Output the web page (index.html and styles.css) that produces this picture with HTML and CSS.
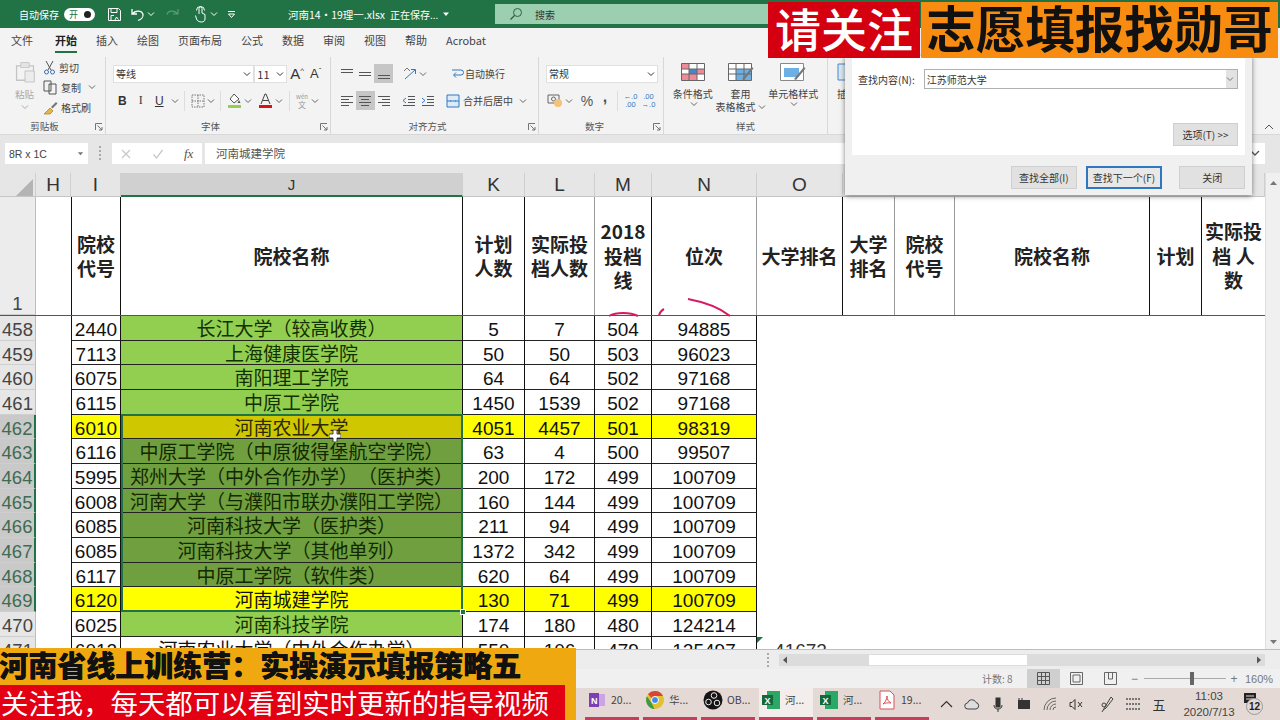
FILE: index.html
```html
<!DOCTYPE html>
<html lang="zh-CN">
<head>
<meta charset="utf-8">
<title>河南14·19理一.xlsx - Excel</title>
<link rel="stylesheet" href="styles.css">
</head>
<body>
<svg class="defs" width="0" height="0" aria-hidden="true">
  <symbol id="chev" viewBox="0 0 8 8"><path d="M1 2.500 4 5.500 7 2.500" fill="none" stroke="currentColor" stroke-width="1"/></symbol>
  <symbol id="launch" viewBox="0 0 8 8"><path d="M.5 7V.5H7M2.500 2.500 7 7M7 4v3H4" fill="none" stroke="#666" stroke-width=".9"/></symbol>
</svg>

<div class="app">
  <header class="titlebar">
    <span class="autosave">自动保存</span>
    <span class="toggle"><span class="toggle-text">开</span><span class="knob"></span></span>
    <svg class="qa qa-save" width="15" height="15" viewBox="0 0 15 15"><path d="M1.500 1.500h10l2 2v10h-12zM4 1.500v4h6v-4M4 13.500v-5h3M8 13l1.500-3 2 2.500" fill="none" stroke="#fff" stroke-width="1"/></svg>
    <svg class="qa qa-undo" width="15" height="15" viewBox="0 0 15 15"><path d="M2 2v5h5M2.500 7C5 3 12 3 13 7.500 13.500 10 11 12.500 8 13.500" fill="none" stroke="#fff" stroke-width="1.300"/></svg>
    <svg class="qa-chev" width="8" height="8"><use href="#chev"/></svg>
    <svg class="qa qa-redo" width="15" height="15" viewBox="0 0 15 15"><path d="M13 2v5H8M12.500 7C10 3 3 3 2 7.500" fill="none" stroke="#5c9a78" stroke-width="1.200"/></svg>
    <svg class="qa qa-touch" width="14" height="17" viewBox="0 0 14 17"><path d="M5 8V2.500a1.500 1.500 0 0 1 3 0V7l3 1.500V13c0 2-1.500 3-3.500 3S3 15 2.500 13L1.500 9.500M2.500 4.500a4 4 0 0 1 8 0" fill="none" stroke="#fff" stroke-width="1"/></svg>
    <svg class="qa-chev" width="8" height="8"><use href="#chev"/></svg>
    <svg class="qa-custom" width="9" height="9" viewBox="0 0 9 9"><path d="M1 1.500h7M1.500 4 4.500 7.500 7.500 4z" fill="none" stroke="#fff" stroke-width="1"/></svg>
    <span class="filename">河南14·19理一.xlsx</span>
    <span class="saving">正在保存...</span>
    <svg class="title-caret" width="8" height="8" viewBox="0 0 8 8"><path d="M1 2.500h6L4 6z" fill="#fff"/></svg>
    <div class="search">
      <svg width="14" height="14" viewBox="0 0 14 14"><circle cx="8.500" cy="5.500" r="4" fill="none" stroke="#2f5f45"/><path d="M5.500 8.500 1.500 12.500" stroke="#2f5f45" stroke-width="1.300"/></svg>
      <span>搜索</span>
    </div>
  </header>

  <nav class="tabs">
    <span class="tab">文件</span>
    <span class="tab tab-active">开始</span>
    <span class="tab">插入</span>
    <span class="tab">绘图</span>
    <span class="tab">页面布局</span>
    <span class="tab">公式</span>
    <span class="tab">数据</span>
    <span class="tab">审阅</span>
    <span class="tab">视图</span>
    <span class="tab">帮助</span>
    <span class="tab">Acrobat</span>
  </nav>

  <section class="ribbon">
    <div class="group g-clip">
      <div class="group-body clip-body">
        <div class="paste">
          <svg width="22" height="27" viewBox="0 0 26 32"><path d="M3 7h20v17H3z" fill="none" stroke="#c4c4c4" stroke-width="1.500"/><path d="M8 3h10v6H8z" fill="#e4e4e4" stroke="#c4c4c4"/><path d="M13 13h11v13H13z" fill="#ececec" stroke="#bdbdbd"/></svg>
          <span>粘贴</span>
          <svg class="chev-gray" width="8" height="8"><use href="#chev"/></svg>
        </div>
        <div class="clip-list">
          <div class="clip-item"><svg width="13" height="15" viewBox="0 0 13 15"><path d="M3 1l5 9M10 1 5 10" stroke="#555" fill="none"/><circle cx="3.500" cy="12" r="2" fill="none" stroke="#3a70b0"/><circle cx="9.500" cy="12" r="2" fill="none" stroke="#3a70b0"/></svg><span>剪切</span></div>
          <div class="clip-item"><svg width="15" height="15" viewBox="0 0 15 15"><path d="M1 1h7v10H1zM6 4h7v10H6z" fill="#f3f3f3" stroke="#555"/></svg><span>复制</span><svg class="chev-sm" width="8" height="8"><use href="#chev"/></svg></div>
          <div class="clip-item"><svg width="15" height="15" viewBox="0 0 15 15"><path d="M1 14 7 8l3 3-3 3z" fill="#e9b44c" stroke="#a97c20" stroke-width=".7"/><path d="M8 7l5-5 1.500 1.500-5 5z" fill="#777"/></svg><span>格式刷</span></div>
        </div>
      </div>
      <div class="group-label">剪贴板<svg class="launch" width="8" height="8"><use href="#launch"/></svg></div>
    </div>

    <div class="group g-font">
      <div class="group-body">
        <div class="tool-row">
          <div class="select sel-font"><span>等线</span><svg width="8" height="8"><use href="#chev"/></svg></div>
          <div class="select sel-size"><span>11</span><svg width="8" height="8"><use href="#chev"/></svg></div>
          <span class="grow-a">A<sup>^</sup></span>
          <span class="shrink-a">A<sup>ˇ</sup></span>
        </div>
        <div class="tool-row fmt-row">
          <b class="fmt fmt-b">B</b><i class="fmt fmt-i">I</i><u class="fmt fmt-u">U</u>
          <svg class="c-gray" width="8" height="8"><use href="#chev"/></svg>
          <span class="vsep"></span>
          <svg class="ic" width="14" height="14" viewBox="0 0 14 14"><path d="M1 1h12v12H1zM7 1v12M1 7h12" fill="none" stroke="#777" stroke-dasharray="1.500 1"/></svg>
          <svg class="c-gray" width="8" height="8"><use href="#chev"/></svg>
          <span class="vsep"></span>
          <svg class="ic" width="15" height="15" viewBox="0 0 15 15"><path d="M7 1 12 6 7 10 3 6z" fill="#fff" stroke="#555"/><path d="M12 7l1.500 3h-3z" fill="#555"/><path d="M1 12h13v3H1z" fill="#92d050"/></svg>
          <svg class="c-gray" width="8" height="8"><use href="#chev"/></svg>
          <svg class="ic ic-color" width="15" height="15" viewBox="0 0 15 15"><path d="M3 11 7 1h1l4 10M4.500 7.500h6" fill="none" stroke="#444"/><path d="M1 12h13v3H1z" fill="#e01010"/></svg>
          <svg class="c-gray" width="8" height="8"><use href="#chev"/></svg>
          <span class="vsep"></span>
          <span class="wen"><small>wén</small>文</span>
          <svg class="c-gray" width="8" height="8"><use href="#chev"/></svg>
        </div>
      </div>
      <div class="group-label">字体<svg class="launch" width="8" height="8"><use href="#launch"/></svg></div>
    </div>

    <div class="group g-align">
      <div class="group-body">
        <div class="tool-row al-row">
          <span class="al"><svg width="14" height="12" viewBox="0 0 14 12"><path d="M1 1.500h12M1 4.500h12" stroke="#555"/></svg></span>
          <span class="al"><svg width="14" height="12" viewBox="0 0 14 12"><path d="M1 4.500h12M1 7.500h12" stroke="#555"/></svg></span>
          <span class="al al-on"><svg width="14" height="12" viewBox="0 0 14 12"><path d="M1 7.500h12M1 10.500h12" stroke="#555"/></svg></span>
          <svg class="orient" width="14" height="14" viewBox="0 0 14 14"><path d="M2 12 12 3M8 2.500h4.500V7" fill="none" stroke="#2f78c0"/><path d="M1 4l3-3 3 3" fill="none" stroke="#777"/></svg>
          <svg class="c-gray" width="8" height="8"><use href="#chev"/></svg>
          <svg class="wrap-ic" width="14" height="14" viewBox="0 0 14 14"><path d="M2 3h9a2 2 0 0 1 0 5H4M6 5.500 3.500 8 6 10.500" fill="none" stroke="#2f78c0"/></svg>
          <span class="al-text">自动换行</span>
        </div>
        <div class="tool-row al-row">
          <span class="al"><svg width="14" height="12" viewBox="0 0 14 12"><path d="M1 1.500h12M1 4.500h8M1 7.500h12M1 10.500h8" stroke="#555"/></svg></span>
          <span class="al al-on"><svg width="14" height="12" viewBox="0 0 14 12"><path d="M1 1.500h12M3 4.500h8M1 7.500h12M3 10.500h8" stroke="#555"/></svg></span>
          <span class="al"><svg width="14" height="12" viewBox="0 0 14 12"><path d="M1 1.500h12M5 4.500h8M1 7.500h12M5 10.500h8" stroke="#555"/></svg></span>
          <svg class="indent" width="14" height="12" viewBox="0 0 14 12"><path d="M6 1.500h7M6 4.500h7M6 7.500h7M1 10.500h12" stroke="#555"/><path d="M4 3 1 5.500 4 8" fill="none" stroke="#2f78c0"/></svg>
          <svg class="indent2" width="14" height="12" viewBox="0 0 14 12"><path d="M6 1.500h7M6 4.500h7M6 7.500h7M1 10.500h12" stroke="#555"/><path d="M1 3 4 5.500 1 8" fill="none" stroke="#2f78c0"/></svg>
          <svg class="merge-ic" width="14" height="14" viewBox="0 0 14 14"><path d="M1 1h12v12H1zM1 7h4M9 7h4" fill="#dcebf7" stroke="#2f78c0"/><path d="M4 7h6" stroke="#2f78c0"/></svg>
          <span class="al-text merge-text">合并后居中</span>
          <svg class="c-gray merge-chev" width="8" height="8"><use href="#chev"/></svg>
        </div>
      </div>
      <div class="group-label">对齐方式<svg class="launch" width="8" height="8"><use href="#launch"/></svg></div>
    </div>

    <div class="group g-num">
      <div class="group-body">
        <div class="tool-row">
          <div class="select sel-num"><span>常规</span><svg width="8" height="8"><use href="#chev"/></svg></div>
        </div>
        <div class="tool-row num-row">
          <svg width="16" height="15" viewBox="0 0 16 15"><path d="M1 2h11v8H1z" fill="none" stroke="#666"/><circle cx="6.500" cy="6" r="2" fill="none" stroke="#666"/><circle cx="11" cy="10" r="4" fill="#f4c27a"/></svg>
          <svg class="c-gray" width="8" height="8"><use href="#chev"/></svg>
          <span class="pct">%</span>
          <span class="comma">,</span>
          <span class="vsep"></span>
          <span class="dec"><em>←.0</em><em>.00</em></span>
          <span class="dec"><em>.00</em><em>→.0</em></span>
        </div>
      </div>
      <div class="group-label">数字<svg class="launch" width="8" height="8"><use href="#launch"/></svg></div>
    </div>

    <div class="group g-style">
      <div class="group-body style-body">
        <div class="big-btn big-cond">
          <svg width="24" height="18" viewBox="0 0 24 18"><path d="M.5.5h23v17H.5z" fill="#fff" stroke="#666"/><path d="M1 1h7v5H1zM16 6h7v5h-7zM1 11h7v6H1zM8 11h8v6H8z" fill="#f08a98"/><path d="M8 6h8v5H8z" fill="#4a86c5"/><path d="M8 .5v17M16 .5v17M.5 6h23M.5 11h23" stroke="#666" fill="none"/></svg>
          <span>条件格式</span><svg class="c-gray" width="8" height="8"><use href="#chev"/></svg>
        </div>
        <div class="big-btn big-table">
          <svg width="26" height="18" viewBox="0 0 26 18"><path d="M.5.5h23v17H.5z" fill="#fff" stroke="#666"/><path d="M8 6h15v11H8z" fill="#6cb0e6"/><path d="M8 .5v17M16 .5v17M.5 6h23M.5 11h23" stroke="#666" fill="none"/><path d="M14 16 24 4l1.500 1.500L16 17z" fill="#777"/></svg>
          <span>套用</span><span class="big-line">表格格式<svg class="c-gray" width="8" height="8"><use href="#chev"/></svg></span>
        </div>
        <div class="big-btn big-cell">
          <svg width="26" height="18" viewBox="0 0 26 18"><path d="M.5.5h23v17H.5z" fill="#fff" stroke="#888"/><path d="M4 5h15v9H4z" fill="#6cb0e6"/><path d="M14 16 24 4l1.500 1.500L16 17z" fill="#777"/></svg>
          <span>单元格样式</span><svg class="c-gray" width="8" height="8"><use href="#chev"/></svg>
        </div>
      </div>
      <div class="group-label">样式</div>
    </div>

    <div class="big-btn big-insert">
      <svg width="20" height="18" viewBox="0 0 20 18"><path d="M1 1h18v16H1z" fill="#d8e8f5" stroke="#4a86c5"/></svg>
      <span>插入</span>
    </div>

    <button class="collapse" type="button"><svg width="10" height="10" viewBox="0 0 10 10"><path d="M1 7 5 3l4 4" fill="none" stroke="#555"/></svg></button>
  </section>

  <section class="formula">
    <div class="namebox"><span>8R x 1C</span><svg width="7" height="7" viewBox="0 0 8 8"><path d="M1 2.500h6L4 6z" fill="#777"/></svg></div>
    <span class="grip"></span>
    <div class="fx-btns">
      <svg width="12" height="12" viewBox="0 0 12 12"><path d="M2 2l8 8M10 2l-8 8" stroke="#c8c8c8" stroke-width="1.300"/></svg>
      <svg width="12" height="12" viewBox="0 0 12 12"><path d="M1.500 6.500 4.500 10l6-8" fill="none" stroke="#c8c8c8" stroke-width="1.300"/></svg>
      <span class="fx">fx</span>
    </div>
    <div class="fx-input">河南城建学院</div>
    <div class="fx-drop"><svg width="10" height="10" viewBox="0 0 10 10"><path d="M1 3l4 4 4-4" fill="none" stroke="#555" stroke-width="1.300"/></svg></div>
  </section>

  <main class="sheet">
    <div class="grid">
      <div class="row colhead">
        <div class="corner"><span></span></div>
        <div>H</div><div>I</div><div class="col-on">J</div><div>K</div><div>L</div><div>M</div><div>N</div><div>O</div><div>P</div><div>Q</div><div>R</div><div>S</div><div>T</div>
      </div>
      <div class="row headrow">
        <div class="rh rh-one">1</div>
        <div></div>
        <div class="h">院校<br>代号</div>
        <div class="h">院校名称</div>
        <div class="h">计划<br>人数</div>
        <div class="h h-soft">实际投<br>档人数</div>
        <div class="h">2018<br>投档<br>线</div>
        <div class="h h-soft">位次</div>
        <div class="h">大学排名</div>
        <div class="h h-soft">大学<br>排名</div>
        <div class="h h-soft">院校<br>代号</div>
        <div class="h">院校名称</div>
        <div class="h">计划</div>
        <div class="h h-last">实际投<br>档 人<br>数</div>
      </div>

      <div class="row"><div class="rh">458</div><div></div><div class="c">2440</div><div class="c g">长江大学（较高收费）</div><div class="c">5</div><div class="c">7</div><div class="c">504</div><div class="c">94885</div></div>
      <div class="row"><div class="rh">459</div><div></div><div class="c">7113</div><div class="c g">上海健康医学院</div><div class="c">50</div><div class="c">50</div><div class="c">503</div><div class="c">96023</div></div>
      <div class="row"><div class="rh">460</div><div></div><div class="c">6075</div><div class="c g">南阳理工学院</div><div class="c">64</div><div class="c">64</div><div class="c">502</div><div class="c">97168</div></div>
      <div class="row"><div class="rh">461</div><div></div><div class="c">6115</div><div class="c g">中原工学院</div><div class="c">1450</div><div class="c">1539</div><div class="c">502</div><div class="c">97168</div></div>
      <div class="row"><div class="rh rh-on">462</div><div></div><div class="c y">6010</div><div class="c yt">河南农业大学</div><div class="c y">4051</div><div class="c y">4457</div><div class="c y">501</div><div class="c y">98319</div></div>
      <div class="row"><div class="rh rh-on">463</div><div></div><div class="c">6116</div><div class="c gt">中原工学院（中原彼得堡航空学院）</div><div class="c">63</div><div class="c">4</div><div class="c">500</div><div class="c">99507</div></div>
      <div class="row"><div class="rh rh-on">464</div><div></div><div class="c">5995</div><div class="c gt">郑州大学（中外合作办学）（医护类）</div><div class="c">200</div><div class="c">172</div><div class="c">499</div><div class="c">100709</div></div>
      <div class="row"><div class="rh rh-on">465</div><div></div><div class="c">6008</div><div class="c gt">河南大学（与濮阳市联办濮阳工学院）</div><div class="c">160</div><div class="c">144</div><div class="c">499</div><div class="c">100709</div></div>
      <div class="row"><div class="rh rh-on">466</div><div></div><div class="c">6085</div><div class="c gt">河南科技大学（医护类）</div><div class="c">211</div><div class="c">94</div><div class="c">499</div><div class="c">100709</div></div>
      <div class="row"><div class="rh rh-on">467</div><div></div><div class="c">6085</div><div class="c gt">河南科技大学（其他单列）</div><div class="c">1372</div><div class="c">342</div><div class="c">499</div><div class="c">100709</div></div>
      <div class="row"><div class="rh rh-on">468</div><div></div><div class="c">6117</div><div class="c gt">中原工学院（软件类）</div><div class="c">620</div><div class="c">64</div><div class="c">499</div><div class="c">100709</div></div>
      <div class="row"><div class="rh rh-on">469</div><div></div><div class="c y">6120</div><div class="c y">河南城建学院</div><div class="c y">130</div><div class="c y">71</div><div class="c y">499</div><div class="c y">100709</div></div>
      <div class="row"><div class="rh">470</div><div></div><div class="c">6025</div><div class="c g">河南科技学院</div><div class="c">174</div><div class="c">180</div><div class="c">480</div><div class="c">124214</div></div>
      <div class="row"><div class="rh">471</div><div></div><div class="c">6012</div><div class="c">河南农业大学（中外合作办学）</div><div class="c">550</div><div class="c">106</div><div class="c">479</div><div class="c">125497</div><div class="note">41672</div></div>
    </div>
    <div class="vscroll">
      <svg width="15" height="15" viewBox="0 0 15 15"><path d="M4 9l3.500-4L11 9z" fill="#777"/></svg>
      <svg width="15" height="15" viewBox="0 0 15 15"><path d="M4 6l3.500 4L11 6z" fill="#777"/></svg>
    </div>
  </main>

  <section class="hscroll">
    <span class="grip grip-h"></span>
    <div class="htrack">
      <svg width="12" height="12" viewBox="0 0 12 12"><path d="M8 2.500 4 6l4 3.500z" fill="#555"/></svg>
      <span class="hthumb"></span>
      <svg width="12" height="12" viewBox="0 0 12 12"><path d="M4 2.500 8 6 4 9.500z" fill="#555"/></svg>
    </div>
  </section>

  <footer class="status">
    <span class="count">计数: 8</span>
    <span class="view view-on"><svg width="13" height="13" viewBox="0 0 13 13"><path d="M.5.5h12v12H.5zM4.500.5v12M8.500.5v12M.5 4.500h12M.5 8.500h12" fill="none" stroke="#555"/></svg></span>
    <span class="view"><svg width="13" height="13" viewBox="0 0 13 13"><path d="M.5.5h12v12H.5zM3 3h7v7H3z" fill="none" stroke="#666"/></svg></span>
    <span class="view"><svg width="13" height="13" viewBox="0 0 13 13"><path d="M.5.5h12v12H.5zM4.500.5V7h4V.5" fill="none" stroke="#666"/></svg></span>
    <span class="zoom-minus">−</span>
    <span class="slider"><span class="thumb"></span></span>
    <span class="zoom-plus">+</span>
    <span class="zoom-pct">160%</span>
  </footer>

  <footer class="taskbar">
    <div class="task"><svg width="20" height="20" viewBox="0 0 20 20"><path d="M2 3h10v14H2z" fill="#7c3fb5"/><path d="M12 4h6v12h-6z" fill="#c9a5e3"/><text class="ic-letter" x="4" y="14">N</text></svg><span>20...</span></div>
    <div class="task"><svg width="20" height="20" viewBox="0 0 20 20"><circle cx="10" cy="10" r="9" fill="#e2c030"/><path d="M10 1a9 9 0 0 1 8 5h-8a4 4 0 0 0-3.500 2L3 4a9 9 0 0 1 7-3z" fill="#d9452f"/><path d="M1.800 6 6.500 13l3 6A9 9 0 0 1 2 6z" fill="#3a9b4a"/><circle cx="10" cy="10" r="3.500" fill="#4587ee" stroke="#fff"/></svg><span>华...</span></div>
    <div class="task"><svg width="20" height="20" viewBox="0 0 20 20"><circle cx="10" cy="10" r="9.500" fill="#151515"/><circle cx="11" cy="5.500" r="2.800" fill="none" stroke="#eee"/><circle cx="5.500" cy="12" r="2.800" fill="none" stroke="#eee"/><circle cx="14" cy="13" r="2.800" fill="none" stroke="#eee"/></svg><span>OB...</span></div>
    <div class="task task-on"><svg width="20" height="20" viewBox="0 0 20 20"><path d="M6 1h13v18H6z" fill="#2aa866"/><path d="M1 5h11v10H1z" fill="#14683c"/><text class="ic-letter" x="3.500" y="13.500">X</text></svg><span>河...</span></div>
    <div class="task"><svg width="20" height="20" viewBox="0 0 20 20"><path d="M6 1h13v18H6z" fill="#2aa866"/><path d="M1 5h11v10H1z" fill="#14683c"/><text class="ic-letter" x="3.500" y="13.500">X</text></svg><span>河...</span></div>
    <div class="task"><svg width="20" height="20" viewBox="0 0 20 20"><path d="M3 1h10l4 4v14H3z" fill="#fff" stroke="#d5545a"/><path d="M6 14c3-2 4-6 4-8 0 4 2 6 4 7-3-.5-6 0-8 1z" fill="none" stroke="#d5545a"/></svg><span>19...</span></div>
    <div class="tray">
      <span class="ti"><svg width="13" height="8" viewBox="0 0 13 8"><path d="M1 7 6.500 1.500 12 7" fill="none" stroke="#333" stroke-width="1.200"/></svg></span>
      <span class="ti"><svg width="16" height="12" viewBox="0 0 16 12"><path d="M4 11a3 3 0 0 1-.5-6A4.500 4.500 0 0 1 12 4.500 3.300 3.300 0 0 1 12 11z" fill="#ddd" stroke="#444"/></svg></span>
      <span class="ti"><svg width="10" height="17" viewBox="0 0 10 17"><path d="M2.500 1.500h5v10h-5z" fill="#333"/><path d="M1 9c0 3 2 4 4 4s4-1 4-4M5 13v3" fill="none" stroke="#333"/></svg></span>
      <span class="ti"><svg width="14" height="12" viewBox="0 0 14 12"><path d="M1 2h12v9H1z" fill="#333"/><path d="M2 0v3M5 0v3" stroke="#333"/></svg></span>
      <span class="ti"><svg width="14" height="14" viewBox="0 0 14 14"><path d="M1 13a12 12 0 0 1 12-12M4 13a9 9 0 0 1 9-9M7 13a6 6 0 0 1 6-6M10 13a3 3 0 0 1 3-3" fill="none" stroke="#666"/></svg></span>
      <span class="ti"><svg width="15" height="13" viewBox="0 0 15 13"><path d="M1 4.500h2L6 1.500v10l-3-3H1z" fill="none" stroke="#333"/><path d="M9 4l4 5M13 4 9 9" stroke="#333"/></svg></span>
      <span class="ti ti-pen"><svg width="14" height="17" viewBox="0 0 14 17"><path d="M11 1 5 11l-3 5M11 1l2 2L6 12 3 14" fill="none" stroke="#444"/><circle cx="4" cy="9" r="2" fill="none" stroke="#444"/></svg></span>
      <span class="ti"><svg width="16" height="15" viewBox="0 0 16 15"><path d="M1 2h14M1 7h14M1 12h14" stroke="#777" stroke-width="2" stroke-dasharray="2 1"/></svg></span>
      <span class="ti ime">五</span>
      <div class="clock"><span>11:03</span><span>2020/7/13</span></div>
      <div class="notify">
        <svg width="14" height="14" viewBox="0 0 14 14"><path d="M1 1h12v10H1z" fill="#222"/><path d="M3 4h8M3 7h8" stroke="#e4d9d5"/></svg>
        <span class="badge">12</span>
      </div>
    </div>
  </footer>
</div>

<aside class="dialog">
  <div class="dlg-panel">
    <div class="dlg-find">
      <label>查找内容(N):</label>
      <div class="dlg-input"><span>江苏师范大学</span><span class="dlg-drop"><svg width="8" height="8"><use href="#chev"/></svg></span></div>
    </div>
    <div class="dlg-opt"><button type="button" class="btn btn-opt">选项(T) &gt;&gt;</button></div>
  </div>
  <div class="dlg-foot">
    <button type="button" class="btn btn-all">查找全部(I)</button>
    <button type="button" class="btn btn-next">查找下一个(F)</button>
    <button type="button" class="btn btn-close">关闭</button>
  </div>
</aside>

<div class="banner-top">
  <div class="bt-red">请关注</div>
  <div class="bt-orange">志愿填报找勋哥</div>
</div>

<div class="selection"><span class="sel-handle"></span></div>
<svg class="ink" width="130" height="24" viewBox="0 0 130 24"><path d="M9 20C16 16 30 16 38 20M59 19C60 16 62 14 64 13M88 3C104 6 120 12 130 20" fill="none" stroke="#d81b60" stroke-width="2"/></svg>
<svg class="cursor" width="12" height="12" viewBox="0 0 12 12"><path d="M4 0h4v4h4v4H8v4H4V8H0V4h4z" fill="#fff" stroke="#222" stroke-width=".8"/></svg>

<div class="banner-bottom">
  <div class="bb-title">河南省线上训练营：实操演示填报策略五</div>
  <div class="bb-sub">关注我，每天都可以看到实时更新的指导视频</div>
</div>
</body>
</html>
```
FILE: styles.css
```css
* { box-sizing: border-box; }
html, body { margin: 0; padding: 0; }
body { width: 1280px; height: 720px; overflow: hidden; position: relative; font-family: "Noto Sans CJK SC", "Liberation Sans", sans-serif; font-size: 10px; color: #444; background: #fff; text-spacing-trim: space-all; }
.defs { position: absolute; }
svg { display: block; flex: none; }
.app { display: flex; flex-direction: column; height: 720px; }

/* title bar */
.titlebar { height: 28px; background: #217346; color: #fff; display: flex; align-items: center; padding-left: 19px; flex: none; }
.autosave { font-size: 10px; width: 45px; }
.toggle { width: 31px; height: 13px; border-radius: 7px; background: #fff; display: flex; align-items: center; justify-content: space-between; padding: 0 4px 0 5px; color: #217346; font-size: 9px; }
.knob { width: 7px; height: 7px; border-radius: 50%; background: #222; }
.qa-save { margin-left: 12px; }
.qa-undo { margin-left: 8px; }
.qa-chev { margin-left: 2px; color: #fff; }
.qa-redo { margin-left: 10px; }
.qa-touch { margin-left: 14px; }
.qa-custom { margin-left: 9px; }
.filename { margin-left: 52px; font-size: 10.5px; width: 102px; white-space: nowrap; }
.saving { font-size: 10px; width: 52px; white-space: nowrap; }
.title-caret { margin-left: 0; }
.search { margin-left: 45px; width: 300px; height: 20px; background: #9bcfb0; display: flex; align-items: center; padding-left: 14px; gap: 12px; color: #333; font-size: 10px; }

/* tabs */
.tabs { height: 27px; background: #f3f3f3; display: flex; gap: 19px; padding-left: 11px; align-items: flex-start; font-size: 11px; flex: none; }
.tab { position: relative; height: 25px; line-height: 25px; }
.tab-active { font-weight: 700; color: #222; margin-left: 3px; }
.tab-active::after { content: ""; position: absolute; left: 0; right: 0; bottom: 0; height: 2px; background: #217346; }

/* ribbon */
.ribbon { height: 80px; background: #f3f3f3; display: flex; flex: none; position: relative; border-bottom: 1px solid #d8d8d8; }
.group { display: flex; flex-direction: column; border-right: 1px solid #d8d8d8; margin-top: 2px; position: relative; }
.group-body { flex: 1; padding-top: 3px; }
.group-label { height: 16px; text-align: center; font-size: 9.5px; line-height: 16px; color: #555; }
.launch { position: absolute; right: 2px; bottom: 3px; }
.g-clip { width: 106px; }
.g-clip .group-label { padding-right: 16px; }
.g-font { width: 225px; padding-left: 7px; }
.g-font .group-label { padding-right: 22px; }
.g-align { width: 208px; padding-left: 6px; }
.g-align .group-label { padding-right: 20px; }
.g-num { width: 125px; padding-left: 7px; }
.g-num .group-label { padding-right: 20px; }
.g-style { width: 164px; }
.clip-body { display: flex; padding-left: 14px; padding-top: 3px; }
.paste { width: 30px; display: flex; flex-direction: column; align-items: flex-start; font-size: 9.5px; color: #aaa; }
.paste span { margin: 1px 0 0 1px; line-height: 12px; }
.chev-gray { margin: 3px 0 0 7px; color: #aaa; }
.clip-list { display: flex; flex-direction: column; margin-top: -3px; }
.clip-item { height: 20px; display: flex; align-items: center; gap: 3px; font-size: 10px; margin-left: -1px; }
.chev-sm { margin-left: 4px; color: #666; }
.tool-row { height: 27px; display: flex; align-items: center; }
.select { height: 18px; background: #fff; border: 1px solid #e0e0e0; display: flex; align-items: center; justify-content: space-between; padding: 0 2px; font-size: 10px; color: #333; }
.sel-font { width: 142px; }
.sel-size { width: 33px; font-size: 11px; }
.grow-a { font-size: 15px; margin-left: 3px; width: 20px; font-family: "Liberation Sans", sans-serif; color: #333; }
.shrink-a { font-size: 13px; width: 20px; font-family: "Liberation Sans", sans-serif; color: #333; }
.grow-a sup, .shrink-a sup { font-size: 8px; line-height: 0; }
.fmt { font: 12px "Liberation Sans", sans-serif; color: #333; width: 18.5px; text-align: center; }
.fmt-b { font-weight: 700; }
.fmt-i { font-family: "Liberation Serif", serif; }
.c-gray { color: #666; margin-left: 2px; }
.vsep { width: 1px; height: 20px; background: #ddd; margin: 0 5.5px; }
.ic-color { margin-left: 6.5px; }
.wen { font-size: 8px; line-height: 8px; width: 14px; text-align: center; color: #999; }
.wen small { display: block; font-size: 6px; }
.al { width: 19px; height: 19px; display: flex; align-items: center; justify-content: center; margin-right: -.5px; }
.al-on { background: #c6c6c6; }
.orient { margin-left: 10.5px; }
.wrap-ic { margin-left: 23px; }
.indent { margin-left: 9.5px; }
.indent2 { margin-left: 5px; }
.merge-ic { margin-left: 11px; }
.al-text { font-size: 10px; color: #444; margin-left: 1px; white-space: nowrap; }
.merge-text { margin-left: 3px; }
.merge-chev { margin-left: 6px; }
.sel-num { width: 112px; }
.num-row { padding-left: 1px; color: #555; }
.pct { font: 14px "Liberation Sans", sans-serif; margin-left: 5px; width: 18px; text-align: center; }
.comma { font: bold 16px "Liberation Sans", sans-serif; width: 12px; text-align: center; margin: -8px 0 0 3px; }
.num-row .vsep { margin: 0 4px 0 5.5px; }
.dec { display: flex; flex-direction: column; width: 18px; font: 7.5px/8px "Liberation Sans", sans-serif; color: #2f78c0; text-align: center; }
.dec em { font-style: normal; }
.style-body { display: flex; padding: 6px 0 0; }
.big-btn { display: flex; flex-direction: column; align-items: center; font-size: 10px; line-height: 13px; color: #444; white-space: nowrap; }
.big-btn > svg:first-child { margin-bottom: 6px; }
.big-cond { width: 58px; }
.big-table { width: 38px; }
.big-cell { width: 68px; }
.big-line { display: flex; align-items: center; white-space: nowrap; }
.big-insert { margin: 8px 0 0 9px; }
.collapse { position: absolute; right: 4px; bottom: 0; width: 14px; height: 14px; border: 0; background: none; padding: 2px; }

/* formula bar */
.formula { height: 38px; background: #e6e6e6; display: flex; align-items: flex-start; padding: 8px 0 0 5px; flex: none; }
.namebox { width: 83px; height: 21px; background: #fff; display: flex; align-items: center; justify-content: space-between; padding: 0 4px; font: 10.5px "Liberation Sans", sans-serif; color: #444; }
.grip { width: 3px; height: 14px; margin: 3px 10px 0 11px; border-left: 2px dotted #aaa; }
.fx-btns { width: 90px; height: 21px; background: #fff; display: flex; align-items: center; padding-left: 8px; gap: 20px; }
.fx { font: italic 13px "Liberation Serif", serif; color: #555; }
.fx-input { width: 1044px; height: 21px; margin-left: 3px; background: #fff; padding-left: 11px; font-size: 11.5px; line-height: 20px; color: #555; }
.fx-drop { height: 21px; width: 15px; background: #fff; padding: 5px 0 0 0; margin-left: 1px; }

/* sheet */
.sheet { height: 476px; flex: none; display: flex; overflow: hidden; }
.grid { width: 1265px; overflow: hidden; }
.row { display: grid; grid-template-columns: 36px 35px 50px 342px 62px 70px 57px 105px 86px 52px 60px 195px 52px 63px; grid-template-rows: minmax(0, 1fr); height: 24.66px; }
.colhead { height: 24px; background: #e6e6e6; font: 19px/24px "Liberation Sans", sans-serif; color: #333; text-align: center; }
.colhead > div { border-right: 1px solid #cfcfcf; border-bottom: 1px solid #c6c6c6; }
.corner { position: relative; overflow: hidden; }
.corner span { display: block; margin: 6px 0 0 16px; width: 0; height: 0; border-left: 17px solid transparent; border-bottom: 17px solid #b4b4b4; }
.colhead .col-on { background: #d0d0d0; border-bottom: 2px solid #217346; font-size: 15px; }
.headrow { height: 119px; border-bottom: 1px solid #555; }
.rh { background: #e6e6e6; border-right: 1px solid #bdbdbd; border-bottom: 1px solid #cfcfcf; font: 18.5px/27px "Liberation Sans", sans-serif; color: #444; text-align: center; }
.rh-one { display: flex; align-items: flex-end; justify-content: center; line-height: 20px; background: #ececec; }
.rh-on { background: #c9c9c9; color: #3f6b52; border-right: 2px solid #217346; }
.h { font-weight: 700; font-size: 19px; line-height: 24.5px; color: #222; display: flex; align-items: center; justify-content: center; text-align: center; border-right: 1px solid #111; white-space: nowrap; }
.headrow .h:nth-child(3) { border-left: 1px solid #111; }
.h-soft { border-right-color: #999; }
.h-last { border-right: 0; }
.c { font: 19px/27px "Liberation Sans", "Noto Sans CJK SC", sans-serif; color: #111; text-align: center; border-right: 1px solid #111; border-bottom: 1px solid #222; white-space: nowrap; }
.row > .c:nth-child(3) { border-left: 1px solid #111; }
.c:nth-child(4) { font-family: "Noto Sans CJK SC", sans-serif; line-height: 24px; }
.g { background: #92cf50; color: #143000; }
.gt { background: #6f9f3e; color: #142800; }
.y { background: #ffff00; }
.yt { background: #cfc800; color: #2c2800; }
.note { grid-column: 9; font: 19px/27px "Liberation Sans", sans-serif; color: #333; text-align: center; position: relative; padding-left: 1px; }
.note::before { content: ""; position: absolute; left: 0; top: 0; border-top: 6px solid #217346; border-right: 6px solid transparent; }
.vscroll { width: 15px; background: #f0f0f0; display: flex; flex-direction: column; justify-content: space-between; padding: 3px 0 0; border-left: 1px solid #dedede; }

/* horizontal scrollbar */
.hscroll { height: 20px; background: #ededed; display: flex; align-items: center; flex: none; border-top: 1px solid #bdbdbd; padding-left: 767px; }
.grip-h { margin: 0 9px 0 0; width: 3px; }
.htrack { width: 486px; height: 12px; background: #dcdcdc; display: flex; align-items: center; justify-content: space-between; position: relative; }
.hthumb { position: absolute; left: 90px; width: 158px; height: 10px; background: #fff; }

/* status bar */
.status { height: 19px; background: #f0f0f0; display: flex; align-items: center; justify-content: flex-end; padding-right: 7px; flex: none; font-size: 10px; color: #777; }
.count { margin-right: 14px; }
.view { width: 33.5px; height: 19px; display: flex; align-items: center; justify-content: center; }
.view-on { background: #cfcfcf; }
.zoom-minus { margin-left: 4px; width: 10px; font: 12px "Liberation Sans", sans-serif; }
.slider { width: 82px; height: 1px; background: #aaa; position: relative; margin-left: 3px; }
.thumb { position: absolute; left: 46px; top: -6px; width: 4px; height: 13px; background: #666; }
.zoom-plus { margin-left: 3px; width: 10px; font: 12px "Liberation Sans", sans-serif; text-align: center; }
.zoom-pct { margin-left: 6px; width: 28px; font: 11px "Liberation Sans", sans-serif; text-align: right; }

/* taskbar */
.taskbar { height: 32px; flex: 1; background: #e4d9d5; display: flex; padding-left: 585px; }
.task { width: 58px; padding: 2px 0 0 2px; display: flex; align-items: flex-start; gap: 4px; position: relative; font-size: 10.5px; color: #444; line-height: 20px; }
.task::after { content: ""; position: absolute; left: 0; right: 4px; bottom: 0; height: 3px; background: #c2405c; }
.task-on { background: linear-gradient(90deg, #f3eeeb 0 54px, transparent 54px); }
.ic-letter { font: bold 9px "Liberation Sans", sans-serif; fill: #fff; }
.tray { display: flex; flex: 1; align-items: flex-start; padding-top: 7px; }
.ti { width: 26px; height: 18px; display: flex; align-items: center; justify-content: center; }
.ti-pen { margin-left: 5px; }
.ime { font-size: 13px; color: #333; }
.clock { width: 72px; margin-left: 1px; margin-top: -6px; display: flex; flex-direction: column; align-items: center; font: 11.5px/15.5px "Liberation Sans", sans-serif; color: #444; }
.notify { position: relative; margin-left: -2px; margin-top: -3px; width: 20px; }
.badge { position: absolute; left: 3px; top: 6px; width: 17px; height: 17px; border-radius: 50%; background: #e4d9d5; border: 1px solid #999; font: bold 10px/15px "Liberation Sans", sans-serif; color: #222; text-align: center; }

/* overlays */
.banner-top { position: absolute; left: 768px; top: 2px; width: 510px; height: 56px; display: flex; justify-content: space-between; }
.bt-red { width: 152px; background: #d40010; color: #fff; font-size: 46px; line-height: 50px; text-align: center; font-weight: 500; white-space: nowrap; }
.bt-orange { width: 357px; background: #f88c10; color: #111; font-size: 49.5px; line-height: 50px; text-align: center; font-weight: 700; white-space: nowrap; }

.dialog { position: absolute; left: 845px; top: 56px; width: 407px; height: 139px; background: #f0f0f0; box-shadow: 0 1px 5px rgba(0,0,0,.5); display: flex; flex-direction: column; padding: 0 7px; }
.dlg-panel { height: 99px; background: #fff; padding: 13px 7px 0 6px; }
.dlg-find { display: flex; align-items: center; font-size: 10px; color: #333; }
.dlg-find label { width: 66px; white-space: nowrap; }
.dlg-input { width: 315px; height: 20px; border: 1px solid #b0b0b0; display: flex; justify-content: space-between; align-items: center; padding-left: 2px; color: #333; }
.dlg-drop { width: 11px; height: 18px; background: #e2e2e2; display: flex; align-items: center; color: #777; }
.dlg-opt { display: flex; justify-content: flex-end; margin-top: 34px; }
.btn { font: 10px "Noto Sans CJK SC", sans-serif; color: #333; background: #e1e1e1; border: 1px solid #cfcfcf; padding: 0; height: 23px; }
.btn-opt { width: 65px; }
.dlg-foot { display: flex; padding: 11px 0 0 159px; }
.btn-all { width: 66px; }
.btn-next { width: 77px; margin-left: 9px; border: 2px solid #2f78c0; background: #e8e8e8; }
.btn-close { width: 66px; margin-left: 17px; }

.selection { position: absolute; left: 121px; top: 414px; width: 342px; height: 198px; border: 2px solid #217346; pointer-events: none; }
.sel-handle { position: absolute; right: -5px; bottom: -5px; width: 6px; height: 6px; background: #217346; border: 1px solid #fff; }
.ink { position: absolute; left: 600px; top: 296px; }
.cursor { position: absolute; left: 329px; top: 430px; }

.banner-bottom { position: absolute; left: 0; top: 648px; width: 576px; height: 72px; background: #f0a810; }
.bb-title { height: 37px; margin-left: -1px; font-size: 29px; line-height: 33px; font-weight: 900; color: #111; white-space: nowrap; text-shadow: .5px 0 0 #111; }
.bb-sub { width: 565px; height: 35px; background: #e20012; color: #fff; font-size: 27.4px; line-height: 34px; white-space: nowrap; padding-left: 1px; }
```
